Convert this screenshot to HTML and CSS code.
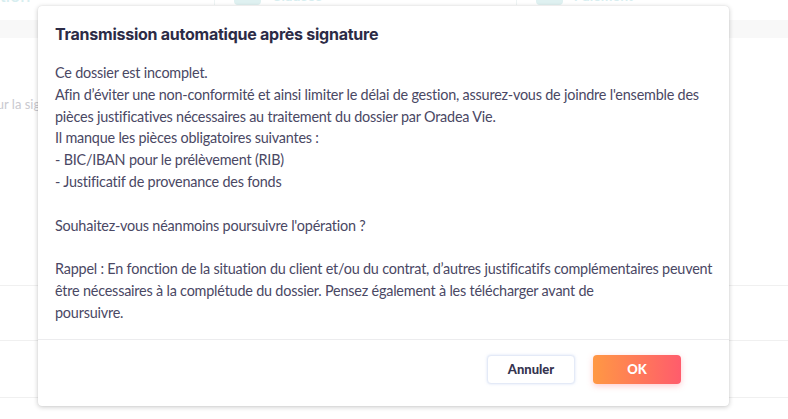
FILE: index.html
```html
<!DOCTYPE html>
<html lang="fr">
<head>
<meta charset="utf-8">
<title>Transmission automatique après signature</title>
<link rel="stylesheet" href="styles.css">
</head>
<body>
<div class="page">
  <div class="steps">
    <div class="step step-first"><span class="step-label">Souscription</span></div>
    <div class="step">
      <span class="step-icon"></span><span class="step-label">Clauses</span>
    </div>
    <div class="step">
      <span class="step-icon"></span><span class="step-label">Paiement</span>
    </div>
  </div>
  <div class="band"></div>
  <div class="content">
    <p class="hint">Pour la signature</p>
  </div>
  <div class="rows">
    <div class="row"></div>
    <div class="row row-mid"></div>
    <div class="row row-last"></div>
  </div>
</div>

<div class="modal" role="dialog" aria-labelledby="modal-title">
  <div class="modal-header">
    <h2 id="modal-title" class="modal-title">Transmission automatique après signature</h2>
  </div>
  <div class="modal-body">
    <p class="text">Ce dossier est incomplet.<br>
Afin d’éviter une non-conformité et ainsi limiter le délai de gestion, assurez-vous de joindre l'ensemble des<br>
pièces justificatives nécessaires au traitement du dossier par Oradea Vie.<br>
Il manque les pièces obligatoires suivantes :<br>
- BIC/IBAN pour le prélèvement (RIB)<br>
- Justificatif de provenance des fonds<br>
<br>
Souhaitez-vous néanmoins poursuivre l'opération ?<br>
<br>
Rappel : En fonction de la situation du client et/ou du contrat, d’autres justificatifs complémentaires peuvent<br>
être nécessaires à la complétude du dossier. Pensez également à les télécharger avant de<br>
poursuivre.</p>
  </div>
  <div class="modal-footer">
    <button class="btn btn-cancel" type="button">Annuler</button>
    <button class="btn btn-ok" type="button">OK</button>
  </div>
</div>
</body>
</html>
```
FILE: styles.css
```css
* { box-sizing: border-box; }

html, body {
  margin: 0;
  padding: 0;
  background: #ffffff;
  width: 788px;
  height: 419px;
  overflow: hidden;
}

body {
  font-family: "Lato", "Open Sans", sans-serif;
  position: relative;
}

/* ---------- background page ---------- */
.page {
  display: flex;
  flex-direction: column;
}

.steps {
  display: flex;
  height: 20px;
  margin-top: -14px;
  align-items: center;
}

.step {
  display: flex;
  flex-shrink: 0;
  align-items: center;
  gap: 11px;
  width: 302px;
  padding-left: 19px;
  border-left: 1px solid #eef4f4;
}

.step-first {
  padding-left: 0;
  border-left: none;
  margin-left: -72px;
  width: 286px;
}

.step-icon {
  display: block;
  width: 27px;
  height: 18px;
  border-radius: 4px;
  background: #dff1f1;
}

.step-label {
  font-family: "Inter", sans-serif;
  font-weight: 600;
  font-size: 13px;
  color: #d7eef0;
}

.step-first .step-label {
  font-weight: 500;
  font-size: 17px;
}

.band {
  margin-top: 14px;
  height: 18px;
  background: #f8f8f8;
}

.content {
  height: 247px;
  padding-top: 58px;
}

.hint {
  margin: 0 0 0 -18px;
  font-size: 13px;
  color: #c9c9cf;
}

.rows {
  display: flex;
  flex-direction: column;
}

.row {
  border-top: 1px solid #f0f0f0;
  height: 55px;
}

.row-mid {
  height: 57px;
}

.row-last {
  height: 22px;
}

/* ---------- modal ---------- */
.modal {
  position: absolute;
  left: 38px;
  top: 6px;
  width: 691px;
  height: 400px;
  background: #ffffff;
  border-radius: 4px;
  box-shadow: 0 1px 5px rgba(0, 0, 0, 0.22), 0 0 1px rgba(0, 0, 0, 0.12);
  display: flex;
  flex-direction: column;
}

.modal-header {
  padding: 16px 17px 0;
}

.modal-title {
  margin: 0;
  font-family: "Inter", sans-serif;
  font-weight: 700;
  font-size: 16px;
  line-height: 24px;
  color: #2c2b46;
  letter-spacing: -0.25px;
}

.modal-body {
  padding: 16px 17px 15px;
  border-bottom: 1px solid #ececee;
}

.text {
  margin: 0;
  font-size: 14.4px;
  line-height: 21.8px;
  letter-spacing: -0.2px;
  white-space: nowrap;
  color: #4a4864;
}

.modal-footer {
  display: flex;
  justify-content: flex-end;
  gap: 18px;
  padding: 15px 48px 22px 0;
}

.btn {
  width: 88px;
  height: 29px;
  border-radius: 4px;
  font-family: "Lato", sans-serif;
  font-weight: 900;
  font-size: 13px;
  cursor: pointer;
}

.btn-cancel {
  background: #ffffff;
  color: #35344f;
  border: 1px solid #e4eaf7;
  box-shadow: 0 0 3px rgba(150, 175, 230, 0.35);
}

.btn-ok {
  background: linear-gradient(90deg, #ff9844 0%, #ff5c6c 100%);
  color: #ffffff;
  border: none;
  box-shadow: 0 2px 6px rgba(255, 110, 120, 0.35);
}
```
